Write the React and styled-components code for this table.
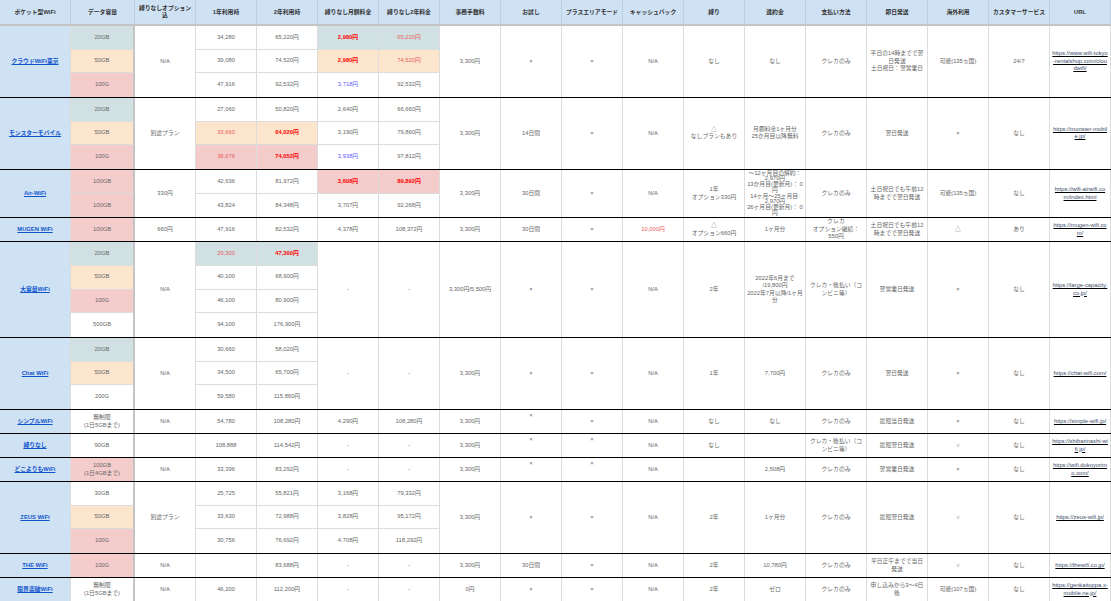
import React from 'react';
import styled, { createGlobalStyle } from 'styled-components';

const GlobalStyle = createGlobalStyle`
  html, body { margin: 0; padding: 0; background: #fff; overflow: hidden; }
  body { font-family: "Liberation Sans", "Noto Sans CJK JP", sans-serif; }
`;

const COLS = '71px 64px repeat(16, 61px)';
const GRID = '#dcdcdc';
const THICK = '#c4c4c4';

const Sheet = styled.div`
  width: 1111px;
`;

const HeaderRow = styled.div`
  display: grid;
  grid-template-columns: ${COLS};
  height: 26px;
  box-sizing: border-box;
  background: #cfe2f3;
  border-bottom: 2px solid ${THICK};
`;

const HeadCell = styled.div`
  display: flex;
  align-items: center;
  justify-content: center;
  text-align: center;
  padding: 0 2px;
  font-size: 5.8px;
  line-height: 7px;
  font-weight: bold;
  color: #333;
  border-right: 1px solid #bcd0e3;
`;

const Group = styled.div`
  display: grid;
  grid-template-columns: ${COLS};
  grid-auto-rows: 1fr;
  height: ${(p) => p.$rows * 24}px;
  box-sizing: border-box;
  border-bottom: 1px solid #000;
`;

const Cell = styled.div`
  grid-row: span ${(p) => p.$span};
  display: flex;
  flex-direction: column;
  align-items: center;
  justify-content: ${(p) => (p.$top ? 'flex-start' : 'center')};
  padding: ${(p) => (p.$top ? '2px 2px 0' : '0 2px')};
  box-sizing: border-box;
  overflow: hidden;
  text-align: center;
  white-space: pre-line;
  font-size: 5.8px;
  line-height: ${(p) => (p.$tight ? '5.7px' : '7.5px')};
  color: ${(p) => p.$color || '#666'};
  font-weight: ${(p) => (p.$bold ? 'bold' : 'normal')};
  background: ${(p) => p.$bg || '#fff'};
  border-right: ${(p) => (p.$thick ? `2px solid ${THICK}` : `1px solid ${GRID}`)};
  border-bottom: ${(p) => (p.$last ? 'none' : `1px solid ${GRID}`)};
`;

const NameCell = styled(Cell)`
  background: #cfe2f3;
`;

const NameLink = styled.a`
  color: #1155cc;
  font-weight: bold;
  text-decoration: underline;
`;

const UrlLink = styled.a`
  color: #3b4b6b;
  text-decoration: underline;
  text-decoration-color: #000;
  word-break: break-all;
`;

const TEAL = '#d0e0e3';
const ORANGE = '#fce5cd';
const PINKBG = '#f4cccc';
const RED = '#ff0000';
const PINK = '#e8605c';
const BLUE = '#5b5bff';

const c = (t, o = {}) => ({ t, ...o });
const cap = (t, bg) => c(t, { bg, cap: true });

const headers = [
  'ポケット型WiFi', 'データ容量', '縛りなしオプション込', '1年利用時', '2年利用時', '縛りなし月額料金',
  '縛りなし2年料金', '事務手数料', 'お試し', 'プラスエリアモード', 'キャッシュバック', '縛り', '違約金',
  '支払い方法', '即日発送', '海外利用', 'カスタマーサービス', 'URL',
];

const groups = [
  {
    name: 'クラウドWiFi東京',
    rows: [
      [
        cap('20GB', TEAL), c('N/A', { s: 3 }), c('34,280'), c('65,220円'),
        c('2,980円', { bg: TEAL, color: RED, bold: true }), c('65,220円', { bg: TEAL, color: PINK }),
        c('3,300円', { s: 3 }), c('×', { s: 3 }), c('×', { s: 3 }), c('N/A', { s: 3 }),
        c('なし', { s: 3 }), c('なし', { s: 3 }), c('クレカのみ', { s: 3 }),
        c('平日の14時までで翌日発送\n土日祝日：翌営業日', { s: 3 }), c('可能(135ヵ国)', { s: 3 }),
        c('24/7', { s: 3 }), c('', { s: 3, u: 'https://www.wifi-tokyo-rentalshop.com/cloudwifi/' }),
      ],
      [
        cap('50GB', ORANGE), c('39,080'), c('74,520円'),
        c('2,980円', { bg: ORANGE, color: RED, bold: true }), c('74,520円', { bg: ORANGE, color: PINK }),
      ],
      [cap('100G', PINKBG), c('47,916'), c('92,532円'), c('3,718円', { color: BLUE }), c('92,532円')],
    ],
  },
  {
    name: 'モンスターモバイル',
    rows: [
      [
        cap('20GB', TEAL), c('別途プラン', { s: 3 }), c('27,060'), c('50,820円'), c('2,640円'), c('66,660円'),
        c('3,300円', { s: 3 }), c('14日間', { s: 3 }), c('×', { s: 3 }), c('N/A', { s: 3 }),
        c('△\nなしプランもあり', { s: 3 }), c('月額料金1ヶ月分\n25か月目以降無料', { s: 3 }),
        c('クレカのみ', { s: 3 }), c('翌日発送', { s: 3 }), c('×', { s: 3 }), c('なし', { s: 3 }),
        c('', { s: 3, u: 'https://monster-mobile.jp/' }),
      ],
      [
        cap('50GB', ORANGE), c('33,660', { bg: ORANGE, color: PINK }),
        c('64,020円', { bg: ORANGE, color: RED, bold: true }), c('3,190円'), c('79,860円'),
      ],
      [
        cap('100G', PINKBG), c('38,676', { bg: PINKBG, color: PINK }),
        c('74,052円', { bg: PINKBG, color: RED, bold: true }), c('3,938円', { color: BLUE }), c('97,812円'),
      ],
    ],
  },
  {
    name: 'Air-WiFi',
    rows: [
      [
        cap('100GB', PINKBG), c('330円', { s: 2 }), c('42,636'), c('81,972円'),
        c('3,608円', { bg: PINKBG, color: RED, bold: true }), c('89,892円', { bg: PINKBG, color: RED, bold: true }),
        c('3,300円', { s: 2 }), c('30日間', { s: 2 }), c('×', { s: 2 }), c('N/A', { s: 2 }),
        c('1年\nオプション330円', { s: 2 }),
        c('～12ヶ月目の解約：2,970円\n13か月目(更新月)： 0円\n14ヶ月～25ヶ月目: 2,970円\n26ヶ月目(更新月)： 0円', { s: 2, tight: true }),
        c('クレカのみ', { s: 2 }), c('土日祝日でも午前12時までで翌日発送', { s: 2 }),
        c('可能(135ヵ国)', { s: 2 }), c('なし', { s: 2 }), c('', { s: 2, u: 'https://wifi-airwifi.com/index.html' }),
      ],
      [cap('100GB', PINKBG), c('43,824'), c('84,348円'), c('3,707円'), c('92,268円')],
    ],
  },
  {
    name: 'MUGEN WiFi',
    rows: [
      [
        cap('100GB', PINKBG), c('660円'), c('47,916'), c('82,532円'), c('4,378円'), c('108,372円'),
        c('3,300円'), c('30日間'), c('×'), c('10,000円', { color: PINK }), c('△\nオプション660円'),
        c('1ヶ月分'), c('クレカ\nオプション継続：550円'), c('土日祝日でも午前12時までで翌日発送'),
        c('△'), c('あり'), c('', { u: 'https://mugen-wifi.com/' }),
      ],
    ],
  },
  {
    name: '大容量WiFi',
    rows: [
      [
        cap('20GB', TEAL), c('N/A', { s: 4 }), c('29,300', { bg: TEAL, color: PINK }),
        c('47,300円', { bg: TEAL, color: RED, bold: true }), c('-', { s: 4 }), c('-', { s: 4 }),
        c('3,300円/5,500円', { s: 4 }), c('×', { s: 4 }), c('×', { s: 4 }), c('N/A', { s: 4 }),
        c('2年', { s: 4 }), c('2022年6月まで\n/19,800円\n2022年7月以降/1ヶ月分', { s: 4 }),
        c('クレカ・後払い（コンビニ等）', { s: 4 }), c('翌営業日発送', { s: 4 }), c('×', { s: 4 }),
        c('なし', { s: 4 }), c('', { s: 4, u: 'https://large-capacity.co.jp/' }),
      ],
      [cap('50GB', ORANGE), c('40,100'), c('68,900円')],
      [cap('100G', PINKBG), c('46,100'), c('80,900円')],
      [cap('500GB'), c('94,100'), c('176,900円')],
    ],
  },
  {
    name: 'Chat WiFi',
    rows: [
      [
        cap('20GB', TEAL), c('N/A', { s: 3 }), c('30,660'), c('58,020円'), c('-', { s: 3 }), c('-', { s: 3 }),
        c('3,300円', { s: 3 }), c('×', { s: 3 }), c('×', { s: 3 }), c('N/A', { s: 3 }), c('1年', { s: 3 }),
        c('7,700円', { s: 3 }), c('クレカのみ', { s: 3 }), c('翌日発送', { s: 3 }), c('×', { s: 3 }),
        c('なし', { s: 3 }), c('', { s: 3, u: 'https://chat-wifi.com/' }),
      ],
      [cap('50GB', ORANGE), c('34,500'), c('65,700円')],
      [cap('200G'), c('59,580'), c('115,860円')],
    ],
  },
  {
    name: 'シンプルWiFi',
    rows: [
      [
        cap('無制限\n(1日5GBまで)'), c('N/A'), c('54,780'), c('108,280円'), c('4,290円'), c('108,280円'),
        c('3,300円'), c('×', { top: true }), c('×'), c('N/A'), c('なし'), c('なし'), c('クレカのみ'),
        c('最短当日発送'), c('×'), c('なし'), c('', { u: 'https://simple-wifi.jp/' }),
      ],
    ],
  },
  {
    name: '縛りなし',
    rows: [
      [
        cap('90GB'), c(''), c('108,888'), c('114,542円'), c('-'), c('-'), c('3,300円'),
        c('×', { top: true }), c('×', { top: true }), c('N/A'), c('なし'), c(''),
        c('クレカ・後払い（コンビニ等）'), c('最短翌日発送'), c('○'), c('なし'),
        c('', { u: 'https://shibarinashi-wifi.jp/' }),
      ],
    ],
  },
  {
    name: 'どこよりもWiFi',
    rows: [
      [
        cap('100GB\n(1日4GBまで)', PINKBG), c('N/A'), c('33,396'), c('83,292円'), c('-'), c('-'), c('3,300円'),
        c('×', { top: true }), c('×', { top: true }), c('N/A'), c(''), c('2,508円'), c('クレカのみ'),
        c('翌営業日発送'), c('×'), c('なし'), c('', { u: 'https://wifi.dokoyorimo.com/' }),
      ],
    ],
  },
  {
    name: 'ZEUS WiFi',
    rows: [
      [
        cap('30GB'), c('別途プラン', { s: 3 }), c('25,725'), c('55,821円'), c('3,168円'), c('79,332円'),
        c('3,300円', { s: 3 }), c('×', { s: 3 }), c('×', { s: 3 }), c('N/A', { s: 3 }), c('2年', { s: 3 }),
        c('1ヶ月分', { s: 3 }), c('クレカのみ', { s: 3 }), c('最短翌日発送', { s: 3 }), c('○', { s: 3 }),
        c('なし', { s: 3 }), c('', { s: 3, u: 'https://zeus-wifi.jp/' }),
      ],
      [cap('50GB', ORANGE), c('33,630'), c('72,988円'), c('3,828円'), c('95,172円')],
      [cap('100G', PINKBG), c('30,756'), c('76,692円'), c('4,708円'), c('118,292円')],
    ],
  },
  {
    name: 'THE WiFi',
    rows: [
      [
        cap('100G', PINKBG), c('N/A'), c(''), c('83,688円'), c('-'), c('-'), c('3,300円'), c('30日間'),
        c('×'), c('N/A'), c('2年'), c('10,780円'), c('クレカのみ'), c('平日正午までで当日発送'),
        c('○'), c('なし'), c('', { u: 'https://thewifi.co.jp/' }),
      ],
    ],
  },
  {
    name: '限界突破WiFi',
    rows: [
      [
        cap('無制限\n(1日5GBまで)'), c('N/A'), c('46,200'), c('112,200円'), c('-'), c('-'), c('0円'),
        c('×'), c('×'), c('N/A'), c('2年'), c('ゼロ'), c('クレカのみ'), c('申し込みから3～4日後'),
        c('可能(107ヵ国)'), c('なし'), c('', { u: 'https://genkaitoppa.x-mobile.ne.jp/' }),
      ],
    ],
  },
];

export default function App() {
  return (
    <Sheet>
      <GlobalStyle />
      <HeaderRow>
        {headers.map((h) => (
          <HeadCell key={h}>{h}</HeadCell>
        ))}
      </HeaderRow>
      {groups.map((g) => {
        const n = g.rows.length;
        return (
          <Group key={g.name} $rows={n}>
            <NameCell $span={n} $last>
              <NameLink href="#">{g.name}</NameLink>
            </NameCell>
            {g.rows.map((row, r) =>
              row.map((cell, i) => {
                const span = cell.s || 1;
                return (
                  <Cell
                    key={`${r}-${i}`}
                    $span={span}
                    $last={r + span === n}
                    $bg={cell.bg}
                    $color={cell.color}
                    $bold={cell.bold}
                    $top={cell.top}
                    $tight={cell.tight}
                    $thick={cell.cap}
                  >
                    {cell.u ? <UrlLink href="#">{cell.u}</UrlLink> : cell.t}
                  </Cell>
                );
              })
            )}
          </Group>
        );
      })}
    </Sheet>
  );
}
